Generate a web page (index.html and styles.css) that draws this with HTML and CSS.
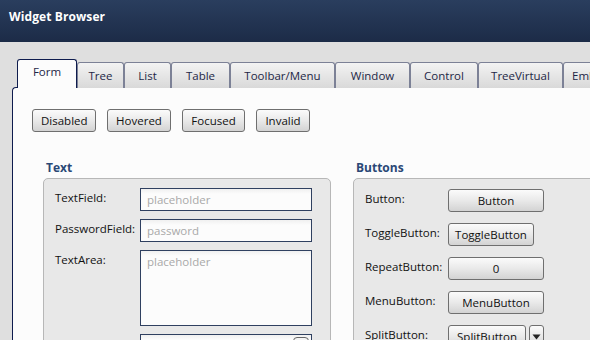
FILE: index.html
```html
<!DOCTYPE html>
<html>
<head>
<meta charset="utf-8">
<link rel="stylesheet" href="styles.css">
</head>
<body>
<div class="app">
  <header class="titlebar"><span class="title">Widget Browser</span></header>
  <main class="main">
    <div class="tabbar">
      <div class="tab tab-active">Form</div>
      <div class="tab w-tree">Tree</div>
      <div class="tab w-list">List</div>
      <div class="tab w-table">Table</div>
      <div class="tab w-toolbar">Toolbar/Menu</div>
      <div class="tab w-window">Window</div>
      <div class="tab w-control">Control</div>
      <div class="tab w-tv">TreeVirtual</div>
      <div class="tab w-em">Embed</div>
    </div>
    <div class="pane">
      <div class="state-row">
        <button class="btn st-disabled">Disabled</button>
        <button class="btn st-hovered">Hovered</button>
        <button class="btn st-focused">Focused</button>
        <button class="btn st-invalid">Invalid</button>
      </div>
      <div class="groups">
        <section class="group group-text">
          <h3 class="group-title">Text</h3>
          <div class="group-box text-box">
            <div class="label">TextField:</div>
            <div class="field">placeholder</div>
            <div class="label">PasswordField:</div>
            <div class="field">password</div>
            <div class="label">TextArea:</div>
            <div class="field area">placeholder</div>
            <div class="label">ComboBox:</div>
            <div class="field combo"><span class="combo-btn"></span></div>
          </div>
        </section>
        <section class="group group-buttons">
          <h3 class="group-title">Buttons</h3>
          <div class="group-box btn-box">
            <div class="label">Button:</div>
            <div><button class="btn wide">Button</button></div>
            <div class="label">ToggleButton:</div>
            <div><button class="btn toggle">ToggleButton</button></div>
            <div class="label">RepeatButton:</div>
            <div><button class="btn wide">0</button></div>
            <div class="label">MenuButton:</div>
            <div><button class="btn wide">MenuButton</button></div>
            <div class="label">SplitButton:</div>
            <div class="split"><button class="btn split-main">SplitButton</button><button class="btn split-arrow"><svg width="9" height="6" viewBox="0 0 9 6"><path d="M0.5 0.5 H8.5 L4.5 5.5 Z" fill="#222"/></svg></button></div>
          </div>
        </section>
      </div>
    </div>
  </main>
</div>
</body>
</html>
```

FILE: styles.css
```css
* { box-sizing: border-box; }
html, body { margin: 0; padding: 0; }
body {
  width: 590px;
  height: 340px;
  overflow: hidden;
  background: #dfdfdf;
  font-family: "Open Sans", "DejaVu Sans", sans-serif;
  font-size: 11.5px;
  color: #111;
}
.app { width: 590px; height: 340px; overflow: hidden; }
.titlebar {
  height: 42px;
  background: linear-gradient(#2a3e5e, #1c2b47);
  padding: 8px 0 0 9px;
}
.title {
  color: #fff;
  font-weight: bold;
  font-size: 12px;
  letter-spacing: 0.1px;
}
.main {
  padding: 17px 0 0 12px;
}
.tabbar {
  display: flex;
  align-items: flex-end;
  padding-left: 5px;
  height: 29px;
  margin-bottom: -1px;
  position: relative;
  z-index: 1;
  white-space: nowrap;
  overflow: hidden;
}
.tab {
  flex: none;
  height: 26px;
  border: 1px solid #7c8196;
  border-bottom: none;
  border-radius: 3px 3px 0 0;
  background: linear-gradient(#f3f3f3, #d9d9d9);
  color: #1e2746;
  text-align: center;
  line-height: 23px;
  padding-top: 1px;
}
.tab-active {
  width: 60px;
  height: 29px;
  background: #fcfcfc;
  border-color: #0f1c4e;
  line-height: 24px;
  padding-top: 0;
}
.w-tree { width: 47px; }
.w-list { width: 47px; }
.w-table { width: 59px; }
.w-toolbar { width: 105px; }
.w-window { width: 75px; }
.w-control { width: 68px; }
.w-tv { width: 85px; }
.w-em { width: 70px; text-align: left; padding-left: 8px; }
.pane {
  background: #fcfcfc;
  border-left: 1px solid #0f1c4e;
  border-top: 1px solid #0f1c4e;
  border-top-left-radius: 4px;
  height: 260px;
  padding: 21px 0 0 19px;
}
.state-row { display: flex; gap: 11px; }
.btn {
  font-family: inherit;
  font-size: 11.5px;
  color: #111;
  height: 23px;
  border: 1px solid #6f6f6f;
  border-radius: 3px;
  background: linear-gradient(#fbfbfb, #e9e9e9 50%, #d3d3d3);
  padding: 0 8px;
  margin: 0;
  line-height: 20px;
  text-align: center;
}
.st-disabled { width: 64px; }
.st-hovered { width: 64px; }
.st-focused { width: 63px; }
.st-invalid { width: 54px; }
.groups {
  display: flex;
  gap: 22px;
  margin-top: 27px;
  margin-left: 11px;
}
.group-title {
  margin: 0 0 0 3px;
  font-size: 12px;
  font-weight: bold;
  color: #2a4876;
  height: 19px;
  line-height: 17px;
}
.group-box {
  background: #e8e8e8;
  border: 1px solid #b7b7b7;
  border-radius: 5px;
  height: 200px;
  display: grid;
  align-content: start;
}
.text-box {
  width: 288px;
  grid-template-columns: 85px 172px;
  padding: 9px 0 0 11px;
  row-gap: 8px;
}
.label { line-height: 16px; padding-top: 2px; }
.field {
  height: 23px;
  border: 1px solid #2f4060;
  background: linear-gradient(#f0f0f0, #fcfcfc 5px);
  color: #a9a9a9;
  padding: 0 6px;
  line-height: 21px;
}
.area { height: 76px; line-height: 21px; }
.combo { position: relative; }
.combo-btn {
  position: absolute;
  right: 2px;
  top: 2px;
  width: 16px;
  height: 14px;
  border: 1px solid #666;
  border-radius: 4px;
  background: #f4f4f4;
}
.btn-box {
  width: 260px;
  grid-template-columns: 83px auto;
  padding: 10px 0 0 11px;
  row-gap: 11px;
  justify-items: start;
}
.wide { width: 96px; }
.toggle { width: 86px; padding: 0 4px; }
.split { display: flex; gap: 3px; }
.split-main { width: 78px; padding: 0 2px; }
.split-arrow { width: 15px; padding: 0; display: flex; align-items: center; justify-content: center; }
.split-arrow svg { display: block; }
```
